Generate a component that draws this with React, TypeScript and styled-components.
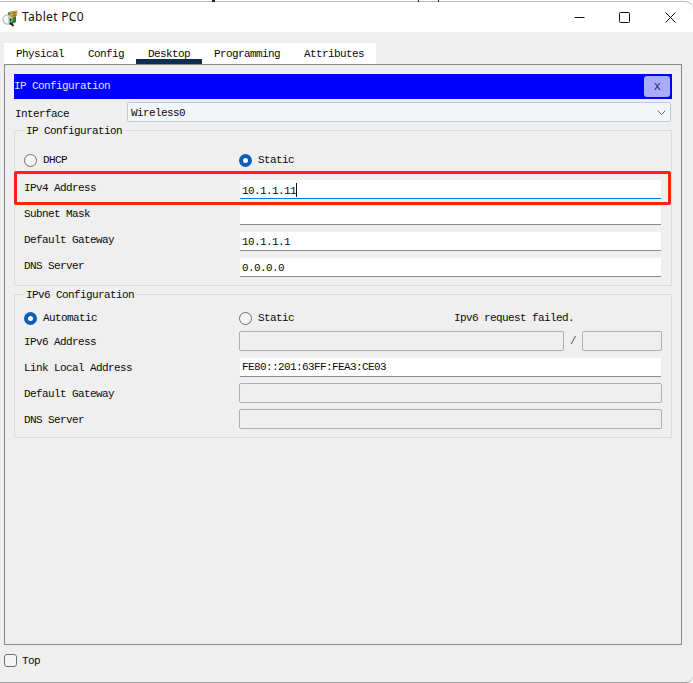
import React from "react";
import styled, { createGlobalStyle } from "styled-components";

const Global = createGlobalStyle`
  html, body { margin: 0; padding: 0; background: #fff; }
  * { box-sizing: border-box; }
`;

const mono = `"Liberation Mono", "DejaVu Sans Mono", monospace`;

const Root = styled.div`
  position: relative;
  width: 693px;
  height: 683px;
  padding-top: 1px;
  display: flex;
  flex-direction: column;
  overflow: hidden;
  background: #fff;
  font-family: ${mono};
  font-size: 11px;
  letter-spacing: -0.6px;
  line-height: 12px;
  color: #0a0a0a;
`;

const CutMark = styled.i<{ $x: number; $w: number }>`
  position: absolute;
  top: 0;
  left: ${(p) => p.$x}px;
  width: ${(p) => p.$w}px;
  height: 2px;
  background: #222;
`;

const TitleBar = styled.header`
  height: 31px;
  flex: none;
  display: flex;
  align-items: center;
  background: #fff;
  border-top: 1px solid #b8b8b8;
  border-top-right-radius: 8px;
  padding-left: 2px;
`;

const AppIcon = styled.svg`
  width: 16px;
  height: 17px;
  flex: none;
  margin-top: 2px;
`;

const Title = styled.span`
  margin-left: 4px;
  font-family: "Noto Sans", "Open Sans", sans-serif;
  font-size: 12px;
  letter-spacing: 0.3px;
  line-height: 16px;
  color: #111;
  flex: 1;
`;

const WinButton = styled.button`
  width: 45.5px;
  height: 30px;
  padding: 0;
  border: 0;
  background: none;
  display: flex;
  align-items: center;
  justify-content: center;
  svg { width: 11px; height: 11px; display: block; }
`;

const Body = styled.main`
  flex: 1;
  min-height: 0;
  display: flex;
  flex-direction: column;
  background: #efefef;
  padding: 11px 11px 0 4px;
  border-bottom: 1px solid #a3a3a3;
  border-bottom-right-radius: 7px;
`;

const TabStrip = styled.nav`
  display: flex;
  align-self: flex-start;
  height: 21px;
  background: #fff;
  flex: none;
`;

const Tab = styled.div<{ $active?: boolean }>`
  height: 21px;
  padding: 5px 12px 0;
  border-bottom: ${(p) => (p.$active ? "5px solid #0f2c52" : "none")};
`;

const Panel = styled.section`
  flex: 1;
  min-height: 0;
  border: 1px solid #858a93;
  padding: 9px 9px 0;
`;

const Header = styled.div`
  height: 25px;
  background: #0000ff;
  color: #dfe6ff;
  display: flex;
  align-items: center;
  justify-content: space-between;
  padding: 0 2px 0 0;
`;

const HeaderTitle = styled.span`
  padding-bottom: 2px;
`;

const CloseChip = styled.div`
  width: 26px;
  height: 21px;
  background: #aaaaff;
  border-radius: 3px;
  color: #23233f;
  display: flex;
  align-items: center;
  justify-content: center;
`;

const InterfaceRow = styled.div`
  display: grid;
  grid-template-columns: 112px 1fr;
  align-items: center;
  height: 20px;
  margin-top: 3px;
  padding: 0 1px;
`;

const InterfaceLabel = styled.span`
  padding-top: 3px;
`;

const Select = styled.div`
  position: relative;
  height: 20px;
  width: 544px;
  background: #f3f6f9;
  border: 1px solid #b6cde0;
  border-radius: 2px;
  padding: 4px 3px 0;
  svg {
    position: absolute;
    right: 4px;
    top: 7px;
    width: 9px;
    height: 5px;
  }
`;

const Group = styled.fieldset<{ $gap: number; $pad: number }>`
  margin: ${(p) => p.$gap}px 0 0;
  min-width: 0;
  border: 1px solid #dcdcdc;
  border-radius: 1px;
  padding: 0 9px ${(p) => p.$pad}px;
`;

const Legend = styled.legend`
  margin-left: 1px;
  padding: 0 2px 0 1px;
  height: 12px;
  line-height: 14px;
`;

const RadioRow = styled.div<{ $top: number; $bottom: number }>`
  display: grid;
  grid-template-columns: 215px 215px 1fr;
  align-items: center;
  height: 14px;
  margin-top: ${(p) => p.$top}px;
  margin-bottom: ${(p) => p.$bottom}px;
`;

const RadioLabel = styled.div`
  display: flex;
  align-items: center;
  gap: 6px;
`;

const Radio = styled.span<{ $on?: boolean }>`
  width: 13px;
  height: 13px;
  flex: none;
  border-radius: 50%;
  border: ${(p) => (p.$on ? "4px solid #0a5fb4" : "1px solid #6f6f6f")};
  background: ${(p) => (p.$on ? "#fff" : "#f5f5f5")};
`;

const Rows = styled.div<{ $gap: number }>`
  display: flex;
  flex-direction: column;
  gap: ${(p) => p.$gap}px;
`;

const Row = styled.div<{ $top?: boolean }>`
  position: relative;
  display: grid;
  grid-template-columns: 215px 1fr;
  align-items: ${(p) => (p.$top ? "start" : "center")};
  min-height: 19px;
`;

const RowLabel = styled.span`
  padding-top: 2px;
`;

const Field = styled.div<{ $focus?: boolean; $low?: boolean; $drop?: boolean }>`
  height: 19px;
  margin: ${(p) => (p.$low ? "1px" : "0")} 1px 0;
  background: #fff;
  border-bottom: 1px solid ${(p) => (p.$focus ? "#0a78d4" : "#8a8a8a")};
  padding: ${(p) => (p.$drop ? "4px" : "3px")} 2px 0;
  white-space: pre;
`;

const Caret = styled.span`
  display: inline-block;
  width: 1px;
  height: 14px;
  margin-left: 0;
  vertical-align: -3px;
  background: #111;
`;

const Disabled = styled.div`
  height: 20px;
  border: 1px solid #adb0b3;
  border-radius: 2px;
`;

const AddressGrid = styled.div`
  display: grid;
  grid-template-columns: 325px 18px 80px;
  align-items: center;
  text-align: center;
  color: #555;
`;

const RedBox = styled.div`
  position: absolute;
  left: -10px;
  right: -9px;
  top: -9px;
  height: 34px;
  border: 3px solid #ff2010;
  border-radius: 2px;
  pointer-events: none;
`;

const Footer = styled.footer`
  height: 37px;
  flex: none;
  margin-right: -11px;
  display: flex;
  align-items: flex-start;
  gap: 5px;
  padding-top: 9px;
`;

const Check = styled.span`
  width: 13px;
  height: 13px;
  border: 1px solid #6f6f6f;
  border-radius: 3px;
  background: #f5f5f5;
`;

const CheckLabel = styled.span`
  padding-top: 1px;
`;

const tabs = ["Physical", "Config", "Desktop", "Programming", "Attributes"];

export default function App() {
  return (
    <Root>
      <Global />
      <CutMark $x={212} $w={3} />
      <CutMark $x={418} $w={1} />
      <CutMark $x={438} $w={1} />
      <TitleBar>
        <AppIcon viewBox="0 0 16 17">
          <path d="M6 2.5 14 1v11l-6 3-2-2z" fill="#2c7a2a" />
          <circle cx="5.5" cy="9.5" r="4.6" fill="#f2f4f2" fillOpacity="0.75" stroke="#b5bab8" strokeWidth="1.2" />
          <path d="M8 1.2 15.5 0.5 15 6 10 8 8 5z" fill="#c9a24a" />
          <path d="M10 3.5 14 2.5M10.5 6 14 5" stroke="#7a5a1e" strokeWidth="0.9" />
          <path d="M7.5 7.5 10 10 8 12z" fill="#0f5a14" />
          <path d="M8 12.5 11.5 16" stroke="#222" strokeWidth="1.8" />
        </AppIcon>
        <Title>Tablet PC0</Title>
        <WinButton aria-label="Minimize">
          <svg viewBox="0 0 11 11"><path d="M0.5 5.5h10" stroke="#111" strokeWidth="1" /></svg>
        </WinButton>
        <WinButton aria-label="Maximize">
          <svg viewBox="0 0 11 11"><rect x="0.5" y="0.5" width="10" height="10" rx="1" fill="none" stroke="#111" /></svg>
        </WinButton>
        <WinButton aria-label="Close">
          <svg viewBox="0 0 11 11"><path d="M0.5 0.5l10 10M10.5 0.5l-10 10" stroke="#111" strokeWidth="1" /></svg>
        </WinButton>
      </TitleBar>
      <Body>
        <TabStrip>
          {tabs.map((t) => (
            <Tab key={t} $active={t === "Desktop"}>{t}</Tab>
          ))}
        </TabStrip>
        <Panel>
          <Header>
            <HeaderTitle>IP Configuration</HeaderTitle>
            <CloseChip>X</CloseChip>
          </Header>
          <InterfaceRow>
            <InterfaceLabel>Interface</InterfaceLabel>
            <Select>
              Wireless0
              <svg viewBox="0 0 9 5"><path d="M0.5 0.5 4.5 4.5 8.5 0.5" fill="none" stroke="#666" /></svg>
            </Select>
          </InterfaceRow>
          <Group $gap={2} $pad={8}>
            <Legend>IP Configuration</Legend>
            <RadioRow $top={17} $bottom={13}>
              <RadioLabel><Radio />DHCP</RadioLabel>
              <RadioLabel><Radio $on />Static</RadioLabel>
            </RadioRow>
            <Rows $gap={7}>
              <Row $top>
                <RowLabel>IPv4 Address</RowLabel>
                <Field $focus>10.1.1.11<Caret /></Field>
                <RedBox />
              </Row>
              <Row $top>
                <RowLabel>Subnet Mask</RowLabel>
                <Field />
              </Row>
              <Row $top>
                <RowLabel>Default Gateway</RowLabel>
                <Field $drop>10.1.1.1</Field>
              </Row>
              <Row $top>
                <RowLabel>DNS Server</RowLabel>
                <Field $drop>0.0.0.0</Field>
              </Row>
            </Rows>
          </Group>
          <Group $gap={2} $pad={8}>
            <Legend>IPv6 Configuration</Legend>
            <RadioRow $top={11} $bottom={6}>
              <RadioLabel><Radio $on />Automatic</RadioLabel>
              <RadioLabel><Radio />Static</RadioLabel>
              <span>Ipv6 request failed.</span>
            </RadioRow>
            <Rows $gap={6}>
              <Row>
                <RowLabel>IPv6 Address</RowLabel>
                <AddressGrid>
                  <Disabled />
                  <span>/</span>
                  <Disabled />
                </AddressGrid>
              </Row>
              <Row>
                <RowLabel>Link Local Address</RowLabel>
                <Field $low>FE80::201:63FF:FEA3:CE03</Field>
              </Row>
              <Row>
                <RowLabel>Default Gateway</RowLabel>
                <Disabled />
              </Row>
              <Row>
                <RowLabel>DNS Server</RowLabel>
                <Disabled />
              </Row>
            </Rows>
          </Group>
        </Panel>
        <Footer>
          <Check />
          <CheckLabel>Top</CheckLabel>
        </Footer>
      </Body>
    </Root>
  );
}
